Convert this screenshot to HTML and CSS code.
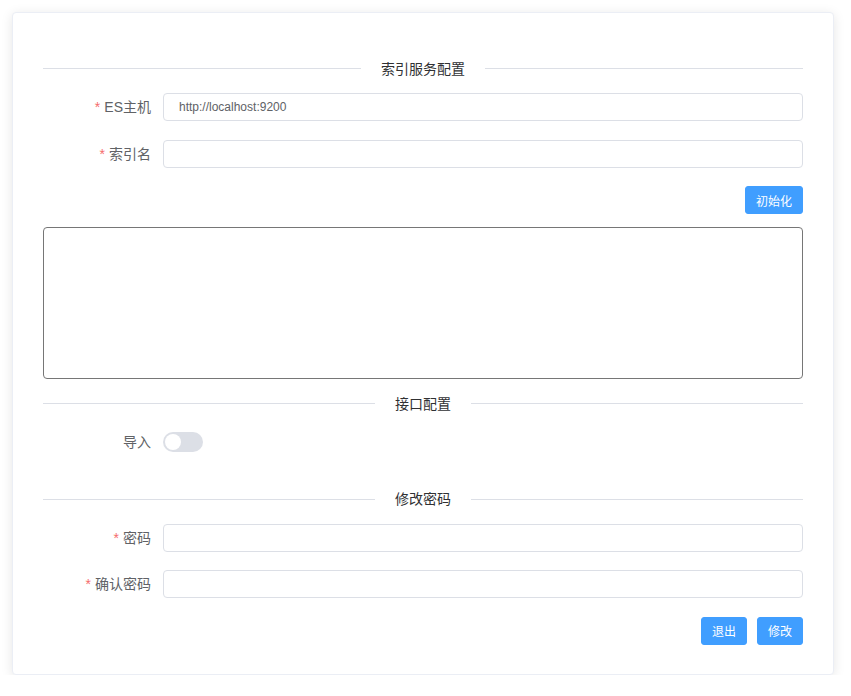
FILE: index.html
```html
<!DOCTYPE html>
<html lang="zh-CN">
<head>
<meta charset="utf-8">
<title>配置</title>
<link rel="stylesheet" href="styles.css">
</head>
<body>
<div class="card">
  <div class="divider"><span class="divider-text">索引服务配置</span></div>

  <div class="form-item">
    <label class="form-label"><span class="req">*</span>ES主机</label>
    <div class="form-content"><input class="input" type="text" value="http://localhost:9200"></div>
  </div>
  <div class="form-item">
    <label class="form-label"><span class="req">*</span>索引名</label>
    <div class="form-content"><input class="input" type="text" value=""></div>
  </div>
  <div class="form-item">
    <div class="form-content actions"><button class="btn">初始化</button></div>
  </div>

  <textarea class="log"></textarea>

  <div class="divider"><span class="divider-text">接口配置</span></div>

  <div class="form-item">
    <label class="form-label">导入</label>
    <div class="form-content"><span class="switch"><span class="knob"></span></span></div>
  </div>

  <div class="divider"><span class="divider-text">修改密码</span></div>

  <div class="form-item">
    <label class="form-label"><span class="req">*</span>密码</label>
    <div class="form-content"><input class="input" type="password" value=""></div>
  </div>
  <div class="form-item">
    <label class="form-label"><span class="req">*</span>确认密码</label>
    <div class="form-content"><input class="input" type="password" value=""></div>
  </div>
  <div class="form-item last">
    <div class="form-content actions"><button class="btn">退出</button><button class="btn">修改</button></div>
  </div>
</div>
</body>
</html>
```

FILE: styles.css
```css
* { box-sizing: border-box; }
html, body { margin: 0; padding: 0; background: #ffffff; }
body {
  padding: 12px 0 0 12px;
  font-family: "Liberation Sans", "Noto Sans CJK SC", sans-serif;
  font-size: 14px;
  color: #606266;
}
.card {
  width: 822px;
  height: 663px;
  border: 1px solid #ebeef5;
  border-radius: 4px;
  background: #fff;
  box-shadow: 0 2px 12px 0 rgba(0, 0, 0, 0.1);
  padding: 31px 30px 30px 30px;
  display: flex;
  flex-direction: column;
}
.divider {
  display: flex;
  align-items: center;
  height: 1px;
  margin: 24px 0;
  flex: none;
}
.divider::before, .divider::after {
  content: "";
  flex: 1;
  height: 1px;
  background: #dcdfe6;
}
.divider-text {
  padding: 0 20px;
  font-size: 14px;
  line-height: 20px;
  color: #303133;
  font-weight: 400;
}
.form-item {
  display: flex;
  margin-bottom: 18.5px;
  min-height: 28px;
  flex: none;
}
.form-item.last { margin-bottom: 0; }
.form-label {
  width: 120px;
  flex: none;
  text-align: right;
  padding-right: 12px;
  line-height: 28px;
  font-size: 14px;
  color: #606266;
}
.req { color: #f56c6c; margin-right: 4px; }
.form-content {
  flex: 1;
  display: flex;
  align-items: center;
}
.form-item .actions { margin-left: 120px; justify-content: flex-end; gap: 10px; }
.input {
  width: 100%;
  height: 28px;
  border: 1px solid #dcdfe6;
  border-radius: 4px;
  padding: 0 15px;
  font-family: "Liberation Sans", "Noto Sans CJK SC", sans-serif;
  font-size: 12px;
  color: #606266;
  outline: none;
  background: #fff;
}
.btn {
  height: 28px;
  padding: 0 10px;
  border: 1px solid #409eff;
  background: #409eff;
  color: #fff;
  font-family: "Liberation Sans", "Noto Sans CJK SC", sans-serif;
  font-size: 12px;
  border-radius: 3px;
  cursor: pointer;
}
.log {
  display: block;
  width: 100%;
  height: 152px;
  margin-top: -5.5px;
  border: 1px solid #767676;
  border-radius: 4px;
  resize: none;
  outline: none;
  font-family: "Liberation Sans", "Noto Sans CJK SC", sans-serif;
  flex: none;
}
.switch {
  display: inline-flex;
  align-items: center;
  width: 40px;
  height: 20px;
  border-radius: 10px;
  background: #dcdfe6;
  padding: 2px;
}
.knob {
  width: 16px;
  height: 16px;
  border-radius: 50%;
  background: #fff;
}
```
